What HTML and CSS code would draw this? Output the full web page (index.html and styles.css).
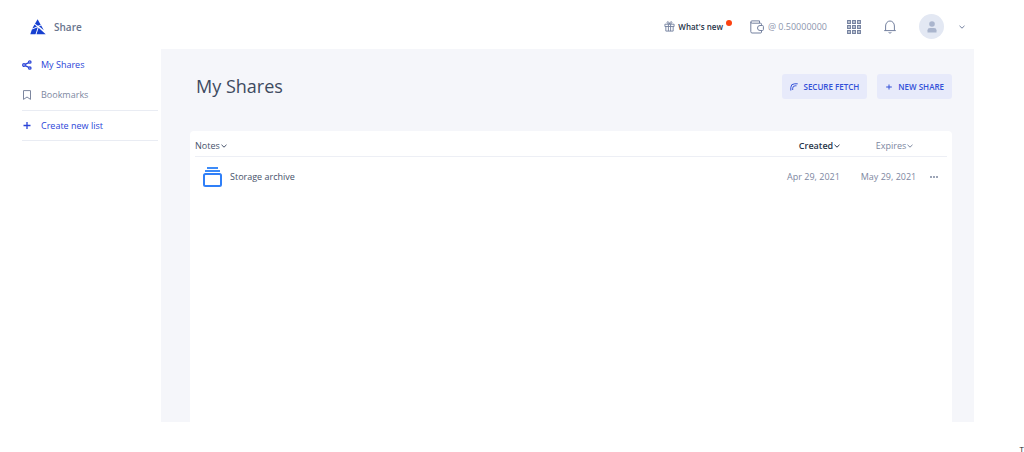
FILE: index.html
```html
<!DOCTYPE html>
<html lang="en">
<head>
<meta charset="utf-8">
<title>My Shares</title>
<link rel="stylesheet" href="styles.css">
</head>
<body>
<div class="app">
  <header class="topbar">
    <a class="brand" href="#">
      <svg class="logo" viewBox="0 0 16 16" width="16" height="16"><path d="M7.600.3 10.700 5.700 8 6.700 5 4.700z M4.500 5.600 7 7.400 2.300 9.600z M1.900 10.600 7.800 8.200 5.500 15.300H.3z M9 7.300 11.200 6.500 13.800 11.200z M8.600 8.700 15.700 15.300H6.500z"/></svg>
      <span>Share</span>
    </a>
    <nav class="tools">
      <button class="tool news">
        <svg class="line" viewBox="0 0 12 12" width="11" height="11"><path d="M1 3.500h10v2.500H1zM2 6v5h8V6M4.800 3.500V11M7.200 3.500V11M6 3.200C4.500 3.200 3 2.500 3.300 1.300 4 .2 5.600 1 6 3.200 6.400 1 8 .2 8.700 1.300 9 2.500 7.500 3.200 6 3.200"/></svg>
        <span>What's new</span><i class="dot"></i>
      </button>
      <button class="tool wallet">
        <svg class="line" viewBox="0 0 14 14" width="14" height="14"><path d="M11.500 5.500V4.200a1 1 0 0 0-1-1H2.200Q.8 3.200.8 2 .8.900 2 .9h7.500V3M.8 2v9.700A1.300 1.300 0 0 0 2 13h8.500a1 1 0 0 0 1-1v-1.500M10 5.500h2.400a1 1 0 0 1 1 1v3a1 1 0 0 1-1 1H10a2.500 2.500 0 0 1 0-5z"/></svg>
        <span>@ 0.50000000</span>
      </button>
      <button class="tool apps" aria-label="Applications">
        <svg class="line" viewBox="0 0 14 14" width="14" height="14"><path d="M.7.7h2.600v2.600H.7zM5.700.7h2.600v2.600H5.700zM10.700.7h2.600v2.600h-2.600zM.7 5.700h2.600v2.600H.7zM5.700 5.700h2.600v2.600H5.700zM10.700 5.700h2.600v2.600h-2.600zM.7 10.700h2.600v2.600H.7zM5.700 10.700h2.600v2.600H5.700zM10.700 10.700h2.600v2.600h-2.600z"/></svg>
      </button>
      <button class="tool bell" aria-label="Notifications">
        <svg class="line" viewBox="0 0 14 14" width="14" height="14"><path d="M1.200 10.600h11.600M2.600 10.600V6a4.400 5 0 0 1 8.800 0v4.600M5.600 12.500q1.400 1.200 2.800 0"/></svg>
      </button>
      <button class="tool account" aria-label="Account">
        <span class="avatar"><svg viewBox="0 0 12 12" width="12" height="12"><circle cx="6" cy="3" r="2.800"/><path d="M1.500 11.500V9.300Q1.500 7 4 7h4q2.500 0 2.500 2.300v2.200z"/></svg></span>
        <svg class="line" viewBox="0 0 8 8" width="8" height="8"><path d="M1.500 2.800 4 5.200 6.500 2.800"/></svg>
      </button>
    </nav>
  </header>
  <div class="body">
    <nav class="sidebar">
      <a class="item active" href="#">
        <svg class="line bold" viewBox="0 0 10 10" width="10" height="10"><circle cx="2" cy="5" r="1.300"/><circle cx="7.800" cy="2" r="1.200"/><circle cx="7.800" cy="8" r="1.200"/><path d="M3.200 4.400 6.700 2.600M3.200 5.600 6.700 7.400"/></svg>
        <span>My Shares</span>
      </a>
      <a class="item" href="#">
        <svg class="line" viewBox="0 0 10 10" width="10" height="10"><path d="M1.500.6h7v8.800L5 7 1.500 9.400z"/></svg>
        <span>Bookmarks</span>
      </a>
      <a class="item active ruled" href="#">
        <svg class="line bold" viewBox="0 0 10 10" width="10" height="10"><path d="M1.500 4.500h7M5 1v7"/></svg>
        <span>Create new list</span>
      </a>
    </nav>
    <main class="content">
      <div class="heading">
        <h1>My Shares</h1>
        <div class="actions">
          <button class="action">
            <svg class="line" viewBox="0 0 8 8" width="8" height="8"><path d="M.8 7.500V4.500Q.8 .8 4.500 .8H7.700M2.700 7V5.200Q2.700 2.800 5.200 2.800H6.500"/></svg>
            <span>SECURE FETCH</span>
          </button>
          <button class="action">
            <svg class="line" viewBox="0 0 8 8" width="8" height="8"><path d="M1.200 4h5.600M4 1.500v5"/></svg>
            <span>NEW SHARE</span>
          </button>
        </div>
      </div>
      <section class="card">
        <table class="shares">
          <thead>
            <tr>
              <th class="name"><button class="sort notes">Notes<svg class="line" viewBox="0 0 6 6" width="6" height="6"><path d="M.5 1.800 3 4.200 5.500 1.800"/></svg></button></th>
              <th class="date"><button class="sort created">Created<svg class="line" viewBox="0 0 6 6" width="6" height="6"><path d="M.5 1.800 3 4.200 5.500 1.800"/></svg></button></th>
              <th class="date"><button class="sort">Expires<svg class="line" viewBox="0 0 6 6" width="6" height="6"><path d="M.5 1.800 3 4.200 5.500 1.800"/></svg></button></th>
              <th class="menu"></th>
            </tr>
          </thead>
          <tbody>
            <tr>
              <td><a class="file" href="#">
                <svg viewBox="0 0 20 20" width="20" height="20"><path class="lid" d="M5 0h11v2H5zM3 3h15v2H3z"/><rect class="box" x="2" y="7" width="17" height="12" rx="1.500"/></svg>
                <span>Storage archive</span></a></td>
              <td class="date">Apr 29, 2021</td>
              <td class="date">May 29, 2021</td>
              <td class="menu"><button class="more" aria-label="More"><svg viewBox="0 0 10 4" width="10" height="4"><circle cx="2" cy="2" r="1"/><circle cx="5" cy="2" r="1"/><circle cx="8" cy="2" r="1"/></svg></button></td>
            </tr>
          </tbody>
        </table>
      </section>
    </main>
  </div>
</div>
<footer class="foot">T</footer>
</body>
</html>
```
FILE: styles.css
```css
* { box-sizing: border-box; }
body {
  display: flex;
  flex-direction: column;
  min-height: 100vh;
  margin: 0;
  overflow: hidden;
  background: #fff;
  color: #7d879f;
  font: 9px/14px "Open Sans", "Noto Sans", sans-serif;
}
button {
  padding: 0;
  border: 0;
  background: none;
  color: inherit;
  font: inherit;
  cursor: pointer;
}
a { color: inherit; text-decoration: none; }
svg { display: block; flex: none; fill: currentColor; }
.line { fill: none; stroke: currentColor; stroke-width: 1; }
.bold { stroke-width: 1.3; }
.app {
  display: flex;
  flex: 1;
  flex-direction: column;
  margin-right: 50px;
}
.topbar {
  display: flex;
  align-items: center;
  justify-content: space-between;
  height: 49px;
  padding: 4px 8px 0 30px;
}
.brand {
  display: flex;
  align-items: center;
  gap: 8px;
  color: #68748c;
  font-size: 10px;
  font-weight: 600;
}
.logo { color: #1740d0; }
.tools { display: flex; align-items: center; }
.tool { display: flex; align-items: center; gap: 3px; color: #74819f; }
.news { margin-right: 18px; }
.news span { color: #283449; font-size: 8px; font-weight: 600; }
.dot {
  width: 6px;
  height: 6px;
  margin-bottom: 8px;
  border-radius: 50%;
  background: #fc4110;
}
.wallet { gap: 4px; margin-right: 20px; }
.wallet span { color: #8c95ad; }
.apps { margin-right: 22px; }
.apps svg { stroke-width: 1.3; }
.bell { margin-right: 22px; }
.account { gap: 14px; }
.avatar {
  display: grid;
  place-items: center;
  width: 25px;
  height: 25px;
  border-radius: 50%;
  background: #e3e8f3;
  color: #aab5cd;
}
.body { display: flex; flex: 1; }
.sidebar { width: 161px; padding: 1px 3px 0 22px; }
.item {
  display: flex;
  align-items: center;
  gap: 9px;
  height: 30px;
}
.active { color: #2a44d8; }
.ruled {
  height: 31px;
  border-top: 1px solid #e9ecf3;
  border-bottom: 1px solid #e9ecf3;
}
.content {
  display: flex;
  flex: 1;
  flex-direction: column;
  padding: 25px 22px 0 29px;
  background: #f5f6fa;
}
.heading {
  display: flex;
  align-items: center;
  justify-content: space-between;
  padding-left: 6px;
}
h1 {
  margin: 0;
  color: #3d4a60;
  font-size: 18px;
  font-weight: 400;
  line-height: 25px;
}
.actions { display: flex; gap: 10px; }
.action {
  display: flex;
  align-items: center;
  gap: 5px;
  height: 25px;
  padding: 0 8px;
  border-radius: 3px;
  background: #e7eafa;
  color: #3350d8;
  font-size: 8px;
  font-weight: 600;
}
.card {
  flex: 1;
  margin-top: 32px;
  padding: 0 5px;
  border-radius: 4px 4px 0 0;
  background: #fff;
}
.shares { width: 100%; border-collapse: collapse; table-layout: fixed; }
.shares th, .shares td { padding: 0; font-weight: 400; text-align: left; }
.shares thead tr { height: 25px; border-bottom: 1px solid #edeff5; }
.shares th { padding-top: 5px; }
.shares tbody tr { height: 42px; }
.shares .date { width: 75px; text-align: center; }
.shares th.date { padding-left: 12px; }
.shares .menu { width: 21px; }
.sort { display: inline-flex; align-items: center; gap: 1px; }
.notes { color: #46526a; }
.created { color: #27344a; font-weight: 600; }
.file {
  display: flex;
  align-items: center;
  gap: 8px;
  padding-left: 7px;
  color: #46526a;
}
.lid { fill: #3d8bf8; }
.box { fill: #fff; stroke: #2f7ff8; stroke-width: 2; }
.more { display: block; margin-left: 3px; }
.foot {
  height: 30px;
  padding-top: 20px;
  color: #222;
  font-size: 8px;
  line-height: 14px;
  text-align: right;
}
```
